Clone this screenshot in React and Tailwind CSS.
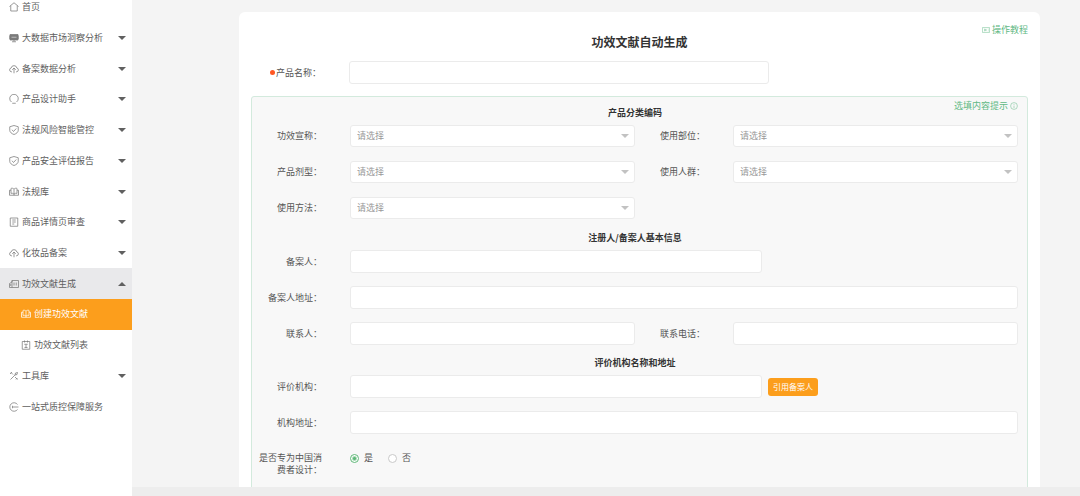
import { useId, useState } from 'react';

const ICONS = {
  home: <path d="M1 9 10 1.5 19 9M3.500 7.500V18h13V7.500" />,
  board: (
    <>
      <path d="M2 3h16v11H2z" fill="currentColor" />
      <path d="M0.5 5v7M19.500 5v7M10 14v3M6 17.500h8" />
      <path d="M5 8.500h10" stroke="#fff" strokeWidth="1" />
    </>
  ),
  cloud: (
    <path d="M6 15.500H4.500a3.800 3.800 0 0 1-.2-7.500 5.800 5.800 0 0 1 11.400 0 3.800 3.800 0 0 1-.2 7.500H14M10 18.500V8M6.500 11.500 10 8l3.500 3.500" />
  ),
  bulb: <path d="M5 16a8.500 8.500 0 1 1 10 0M6.500 18.500h7" />,
  shield: <path d="M10 1 18.500 3.500v7c0 4-4 7-8.500 8.500-4.500-1.500-8.500-4.500-8.500-8.500v-7zM6 9.500l3 3.500 5.500-6" />,
  book: (
    <path d="M10 4.500v12M10 4.500C8 2 5.500 2 4 3v10M10 4.500C12 2 14.500 2 16 3v10M4 6.500H1v10h18v-10h-3M4 13c2-1 4.500-.5 6 1.500 1.500-2 4-2.500 6-1.500" />
  ),
  sheet: <path d="M2.500 2h15v16.500h-15zM6.500 6h7M6.500 10h7M6.500 14h4" />,
  pages: <path d="M6 3h13v14H1V9l5-3zM6 3v14M10 7v6M14.500 7v6M3.500 10v4" />,
  list: <path d="M2.500 3h15v15.500h-15zM7 1v4M13 1v4M6.500 8.500h7M10 8.500V15M7 15h6" />,
  tools: <path d="m3 17 9-9M12 8l1-4 4-1-1 4zM4 3l4 4M12 12l5 5M2 6l4-4M14 17l3-3" />,
  service: <path d="M17 5a8.500 8.500 0 1 0 0 10M7 10h12M7 7.500v5" />,
  video: (
    <>
      <path d="M1 4h18v12H1z" />
      <path d="m6.500 7.500 5 2.500-5 2.500zM16 7v1.500M16 11.500V13" />
    </>
  ),
  info: (
    <>
      <circle cx="10" cy="10" r="8.500" />
      <path d="M10 5v2M10 9v6" />
    </>
  ),
};

const MENU = [
  { icon: 'home', label: '首页' },
  { icon: 'board', label: '大数据市场洞察分析', group: true },
  { icon: 'cloud', label: '备案数据分析', group: true },
  { icon: 'bulb', label: '产品设计助手', group: true },
  { icon: 'shield', label: '法规风险智能管控', group: true },
  { icon: 'shield', label: '产品安全评估报告', group: true },
  { icon: 'book', label: '法规库', group: true },
  { icon: 'sheet', label: '商品详情页审查', group: true },
  { icon: 'cloud', label: '化妆品备案', group: true },
  { icon: 'pages', label: '功效文献生成', group: true, open: true },
  { icon: 'book', label: '创建功效文献', child: true, active: true },
  { icon: 'list', label: '功效文献列表', child: true },
  { icon: 'tools', label: '工具库', group: true },
  { icon: 'service', label: '一站式质控保障服务' },
];

function Icon({ name, className = 'size-2.5' }) {
  return (
    <svg
      viewBox="0 0 20 20"
      fill="none"
      stroke="currentColor"
      strokeWidth="1.5"
      aria-hidden="true"
      className={`shrink-0 ${className}`}
    >
      {ICONS[name]}
    </svg>
  );
}

function Caret({ className = '' }) {
  return (
    <svg viewBox="0 0 8 4" fill="currentColor" aria-hidden="true" className={`h-1 w-2 ${className}`}>
      <path d="M0 0h8L4 4z" />
    </svg>
  );
}

function MenuItem({ item }) {
  const base = 'flex h-full w-full items-center gap-0.5 pr-1.5 text-left';
  const pad = item.child ? 'pl-[21px]' : 'pl-[9px]';
  const tone = item.active
    ? 'bg-[#fc9e1c] text-white'
    : item.open
      ? 'bg-[#e9e9eb] text-[#606060]'
      : 'text-[#606060]';
  const inner = (
    <>
      <Icon name={item.icon} className={item.active ? 'size-2.5' : 'size-2.5 text-[#7a7a7a]'} />
      <span className="flex-1 pl-px whitespace-nowrap">{item.label}</span>
      {item.group && <Caret className={item.open ? 'rotate-180' : ''} />}
    </>
  );

  return (
    <li>
      {item.group ? (
        <button type="button" aria-expanded={!!item.open} className={`${base} ${pad} ${tone}`}>
          {inner}
        </button>
      ) : (
        <a href="#" className={`${base} ${pad} ${tone}`}>
          {inner}
        </a>
      )}
    </li>
  );
}

const LABEL = 'w-[70px] shrink-0 text-right';
const BOX = 'block w-full min-w-0 rounded-[3px] border border-[#ebebeb] bg-white px-1.5 outline-none';

function Field({ label, aside, children }) {
  const id = useId();
  return (
    <div className="flex items-center">
      <label htmlFor={id} className={`${LABEL} mr-7`}>
        {label}：
      </label>
      <div className="relative min-w-0 flex-1">{children(id)}</div>
      {aside}
    </div>
  );
}

function TextField({ label, aside }) {
  return (
    <Field label={label} aside={aside}>
      {(id) => <input id={id} type="text" className={`${BOX} h-[23px]`} />}
    </Field>
  );
}

function SelectField({ label }) {
  return (
    <Field label={label}>
      {(id) => (
        <>
          <select id={id} className={`${BOX} h-[22px] appearance-none text-[#999]`}>
            <option>请选择</option>
          </select>
          <Caret className="pointer-events-none absolute top-[9px] right-1.5 text-[#c2c2c2]" />
        </>
      )}
    </Field>
  );
}

function Radio({ label, ...props }) {
  return (
    <label className="flex items-center gap-[5px]">
      <input
        type="radio"
        name="cn-consumer"
        className="size-[9px] appearance-none rounded-full border border-[#c9c9c9] bg-white checked:border-[#5fb878] checked:bg-[radial-gradient(#5fb878_1px,white_3px)]"
        {...props}
      />
      {label}
    </label>
  );
}

function Heading({ children, className = '' }) {
  return <h2 className={`text-center font-bold text-[#333] ${className}`}>{children}</h2>;
}

export default function App() {
  const [cn, setCn] = useState('yes');

  return (
    <div className="flex h-screen overflow-hidden bg-[#f4f4f4] font-['Noto_Sans_CJK_SC',sans-serif] text-[9px] leading-3 text-[#555]">
      <nav className="w-[132px] shrink-0 bg-white">
        {/* list sits slightly scrolled under the top edge */}
        <ul className="-mt-2 grid h-[430px] auto-rows-fr">
          {MENU.map((item) => (
            <MenuItem key={item.label} item={item} />
          ))}
        </ul>
      </nav>

      <div className="flex min-w-0 flex-1 flex-col">
        <main className="min-h-0 flex-1 overflow-hidden pt-3 pr-10 pl-[107px]">
          <form className="rounded-md bg-white p-3">
            <div className="flex justify-end">
              <a href="#" className="flex items-center gap-0.5 text-[#5fb884]">
                <Icon name="video" className="size-2 opacity-80" />
                操作教程
              </a>
            </div>
            <h1 className="text-center text-[12px] leading-3 font-bold text-[#333]">功效文献自动生成</h1>

            <div className="mt-[13px] flex items-center">
              <label htmlFor="product-name" className="mr-7 flex w-[70px] items-center justify-end gap-px whitespace-nowrap">
                <span className="size-[5px] rounded-full bg-[#ff5722]" />
                产品名称：
              </label>
              <div className="min-w-0 flex-1 pr-[259px]">
                <input id="product-name" type="text" className={`${BOX} h-[23px]`} />
              </div>
            </div>

            <div className="mt-3 rounded-[3px] border border-[#d3eadd] bg-[#f8f8f8] pr-[9px] pb-10">
              <div className="grid grid-cols-[1fr_auto_1fr] items-start pt-[3px]">
                <Heading className="col-start-2 pt-[7px]">产品分类编码</Heading>
                <a href="#" className="flex items-center gap-0.5 justify-self-end text-[#5fb884]">
                  选填内容提示
                  <Icon name="info" className="size-2 opacity-80" />
                </a>
              </div>
              <div className="mt-1.5 grid grid-cols-2 gap-y-3.5">
                <SelectField label="功效宣称" />
                <SelectField label="使用部位" />
                <SelectField label="产品剂型" />
                <SelectField label="使用人群" />
                <SelectField label="使用方法" />
              </div>

              <Heading className="mt-[13px]">注册人/备案人基本信息</Heading>
              <div className="mt-1.5 grid gap-y-[13px]">
                <TextField label="备案人" aside={<div className="w-64" />} />
                <TextField label="备案人地址" />
                <div className="grid grid-cols-2">
                  <TextField label="联系人" />
                  <TextField label="联系电话" />
                </div>
              </div>

              <Heading className="mt-3">评价机构名称和地址</Heading>
              <div className="mt-1.5 grid gap-y-[13px]">
                <TextField
                  label="评价机构"
                  aside={
                    <div className="w-64 pl-1.5">
                      <button type="button" className="block h-[18px] w-[50px] rounded-[3px] bg-[#fc9e1c] text-[8px] whitespace-nowrap text-white">
                        引用备案人
                      </button>
                    </div>
                  }
                />
                <TextField label="机构地址" />
                <div role="radiogroup" aria-labelledby="cn-label" className="flex items-start pt-[5px]">
                  <span id="cn-label" className={`${LABEL} mr-7`}>
                    是否专为中国消费者设计：
                  </span>
                  <div className="flex gap-[15px]">
                    <Radio label="是" checked={cn === 'yes'} onChange={() => setCn('yes')} />
                    <Radio label="否" checked={cn === 'no'} onChange={() => setCn('no')} />
                  </div>
                </div>
              </div>
            </div>
          </form>
        </main>
        <footer className="h-[9px] shrink-0 bg-[#ededed]" />
      </div>
    </div>
  );
}
